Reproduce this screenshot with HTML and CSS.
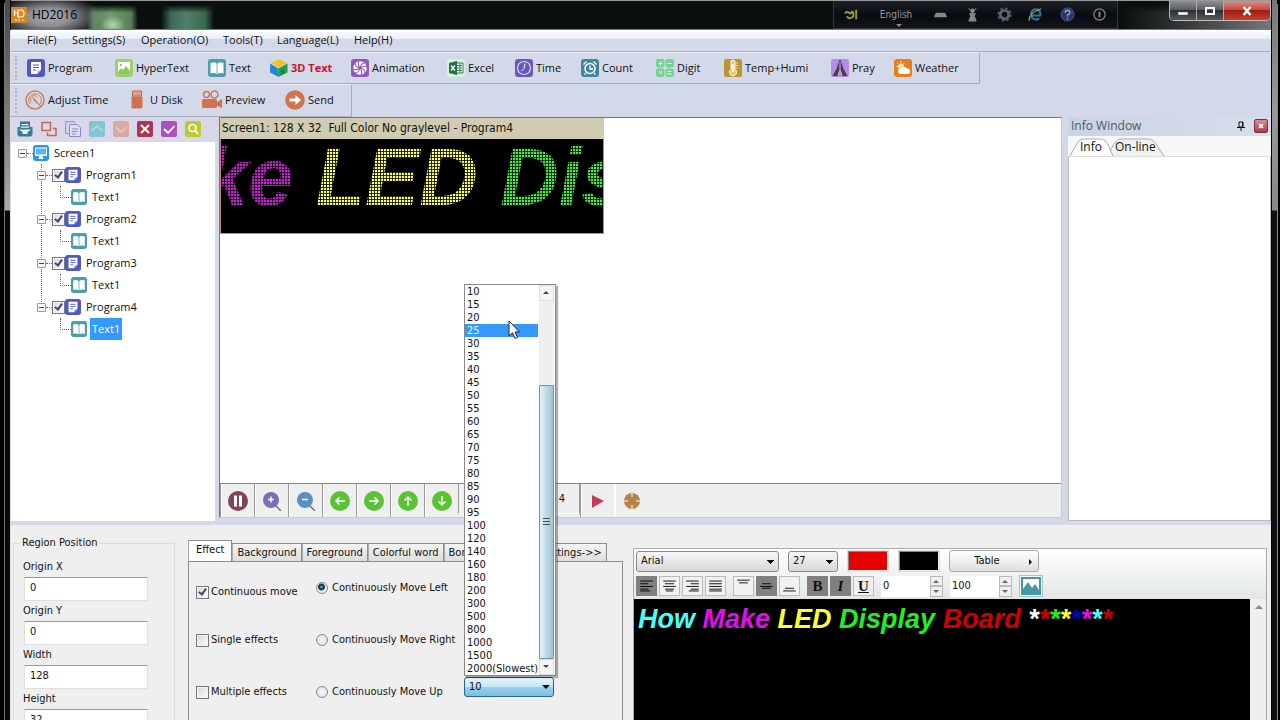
FILE: index.html
```html
<!DOCTYPE html>
<html lang="en">
<head>
<meta charset="utf-8">
<title>HD2016</title>
<link rel="stylesheet" href="styles.css">
</head>
<body>
<svg class="sprite" aria-hidden="true">
  <symbol id="program" viewBox="0 0 18 18"><rect width="18" height="18" rx="3" fill="#5058c8"/><path d="M4 3h10v8l-4 4H4z" fill="#fff"/><path d="M6 6h6M6 8.500h6M6 11h3" stroke="#5058c8"/><path d="M10.500 15v-3.500H14z" fill="#a9aef0"/></symbol>
  <symbol id="hyper" viewBox="0 0 18 18"><rect width="18" height="18" rx="3" fill="#9bd06e"/><rect x="3" y="3" width="12" height="12" fill="#fff"/><path d="M3 13l3-4 2 2 3-4 4 5v3H3z" fill="#8cc860"/><circle cx="6" cy="6" r="1.200" fill="#8cc860"/></symbol>
  <symbol id="text" viewBox="0 0 18 18"><rect width="18" height="18" rx="3" fill="#4aa0a8"/><path d="M2.500 4C5 3 7 3 8.600 4.500V15C7 13.800 5 13.800 2.500 14.500zM15.500 4C13 3 11 3 9.400 4.500V15c1.600-1.200 3.600-1.200 6.100-.5z" fill="#fff"/></symbol>
  <symbol id="cube" viewBox="0 0 18 18"><path d="M9 0l8 4-8 4.500L1 4z" fill="#f6c31c"/><path d="M0 4.500l8.500 5V18L0 13.500z" fill="#2388d8"/><path d="M17.500 4.500l-9 5V18l9-4.500z" fill="#1d9d50"/><path d="M11 12.500l2-1v3" stroke="#116b35" fill="none"/></symbol>
  <symbol id="anim" viewBox="0 0 18 18"><rect width="18" height="18" rx="3" fill="#9258bd"/><circle cx="9" cy="9" r="6.800" fill="#fff"/><path d="M9 9Q6 5 8 2M9 9Q10 4 14 4M9 9q4-3 7-1M9 9q5 1 5 5M9 9q3 4 1 7M9 9q-1 5-5 5M9 9q-4 3-7 1M9 9Q4 8 4 4" stroke="#9258bd" stroke-width="1.100" fill="none"/></symbol>
  <symbol id="excel" viewBox="0 0 18 18"><rect width="18" height="18" rx="3" fill="#d3f3dc"/><path d="M9 4h7v10H9z" fill="#fff" stroke="#2c8150"/><path d="M10 6.500h5M10 9h5M10 11.500h5M13 4v10" stroke="#2c8150"/><path d="M2 4l8-2v14l-8-2z" fill="#1f7244"/><path d="M4 6.500l4 5M8 6.500l-4 5" stroke="#fff" stroke-width="1.300"/></symbol>
  <symbol id="time" viewBox="0 0 18 18"><rect width="18" height="18" rx="3" fill="#6659b8"/><circle cx="9" cy="9" r="6.500" fill="none" stroke="#d9d4ff" stroke-width="1.200"/><path d="M10 4.500L9 9.500 6.500 12" stroke="#fff" fill="none"/></symbol>
  <symbol id="count" viewBox="0 0 18 18"><rect width="18" height="18" rx="3" fill="#40859c"/><circle cx="9" cy="9.500" r="5" fill="none" stroke="#fff" stroke-width="1.500"/><path d="M9 6.500v3.500h3M2.500 5.500l3-3M15.500 5.500l-3-3M5 14l-1.500 1.500M13 14l1.500 1.500" stroke="#fff" stroke-width="1.300" fill="none"/></symbol>
  <symbol id="digit" viewBox="0 0 18 18"><rect width="8.500" height="8.500" rx="2" fill="#77d394"/><rect x="9.500" width="8.500" height="8.500" rx="2" fill="#77d394"/><rect y="9.500" width="8.500" height="8.500" rx="2" fill="#77d394"/><rect x="9.500" y="9.500" width="8.500" height="8.500" rx="2" fill="#77d394"/><path d="M2.500 4.500h4M4.500 2.500v4M11.500 4.500h4M3 12l3 3M6 12l-3 3M11.500 12.500h4M11.500 15h4" stroke="#eafff0"/></symbol>
  <symbol id="temp" viewBox="0 0 18 18"><rect width="18" height="18" rx="2" fill="#bd9434"/><path d="M7 3a2 2 0 014 0v7.500a3.500 3.500 0 11-4 0z" fill="#e8c878" stroke="#fff"/><path d="M9 5v8" stroke="#fff" stroke-width="1.500"/><path d="M12 4h2M12 6.500h2M12 9h2" stroke="#e8d4a0"/></symbol>
  <symbol id="pray" viewBox="0 0 18 18"><rect width="18" height="18" rx="2" fill="#b98aee"/><path d="M8.500 1h1l3 9 4 7h-5L9 12l-2.500 5H1.500l4-7z" fill="#4c3d49"/><path d="M9 3v8L7 16M9 11l2 5" stroke="#e8dcf0" stroke-width=".8" fill="none"/></symbol>
  <symbol id="weather" viewBox="0 0 18 18"><rect width="18" height="18" rx="3" fill="#e87e18"/><circle cx="7" cy="7.500" r="3" fill="#ffe9c0"/><path d="M7 2v2M2 7.500h1.500M3.500 4l1 1M10.500 4l-1 1M3.500 11l1-1" stroke="#ffe9c0"/><path d="M6.500 15a2.500 2.500 0 01.3-5A3.400 3.400 0 0113 9.500a2.700 2.700 0 01.6 5.500z" fill="#fff"/></symbol>
  <symbol id="adjust" viewBox="0 0 20 20"><circle cx="10" cy="10" r="9" fill="none" stroke="#cf7f5f" stroke-width="1.500"/><path d="M5 14A6.300 6.300 0 1115 14M7 12.500A3.800 3.800 0 1112.500 7.500" fill="none" stroke="#cf7f5f"/><path d="M8 7.500l7.500 8.500L9 10.500z" fill="#cf7f5f" stroke="#cf7f5f"/></symbol>
  <symbol id="udisk" viewBox="0 0 20 20"><path d="M5.500 1h9v5h-9z" fill="#dfa38c" stroke="#c9694a"/><path d="M4.500 6.500h11V17a1.500 1.500 0 01-1.500 1.500H6A1.500 1.500 0 014.500 17z" fill="#d0714e"/></symbol>
  <symbol id="camera" viewBox="0 0 20 20"><circle cx="4.500" cy="4.500" r="3" fill="none" stroke="#cf7350" stroke-width="1.500"/><circle cx="12.500" cy="4.500" r="3.500" fill="none" stroke="#cf7350" stroke-width="1.500"/><rect y="9" width="15" height="9" rx="1.500" fill="#cf7350"/><path d="M14 13l6-4v9l-6-3z" fill="#cf7350"/></symbol>
  <symbol id="send" viewBox="0 0 20 20"><circle cx="10" cy="10" r="9.800" fill="#cf7350"/><path d="M4.500 8.500h6V5l5.500 5-5.500 5v-3.500h-6z" fill="#fff"/></symbol>
  <symbol id="archive" viewBox="0 0 16 16"><path d="M3 .5h10V6h2.500v7.500l-1.500 2H2l-1.500-2V6H3z" fill="#347c94"/><path d="M4.500 3h7v1.200h-7zM4 5.500h8v1.200H4zM2 8.500h12l-2.500 2h-1V13h-5v-2.500h-1z" fill="#e8f4f8"/></symbol>
  <symbol id="windows" viewBox="0 0 16 16"><path d="M1 1.500h8.500v8H1zM6.500 11.500v3H15v-7h-3" fill="none" stroke="#c56a45" stroke-width="1.500"/></symbol>
  <symbol id="copy" viewBox="0 0 16 16"><path d="M3.500 12.500H.7V.7H9l1.500 1.500" fill="none" stroke="#8c88cc"/><path d="M4.500 3.500h8l3 3v9h-11z" fill="#dcdcf4" stroke="#8c88cc"/><path d="M7 8h6M7 10.500h6M7 13h4" stroke="#8c88cc"/></symbol>
  <symbol id="up" viewBox="0 0 16 16"><rect width="16" height="16" rx="2" fill="#85c5d2"/><path d="M2.500 10L8 5l5.500 5" fill="none" stroke="#afdce6" stroke-width="1.500"/></symbol>
  <symbol id="down" viewBox="0 0 16 16"><rect width="16" height="16" rx="2" fill="#d9aaa1"/><path d="M2.500 6L8 11l5.500-5" fill="none" stroke="#e9c9c2" stroke-width="1.500"/></symbol>
  <symbol id="del" viewBox="0 0 16 16"><rect width="16" height="16" rx="2" fill="#ae364e"/><path d="M4 4l8 8M12 4l-8 8" stroke="#fff" stroke-width="2"/></symbol>
  <symbol id="ok" viewBox="0 0 16 16"><rect width="16" height="16" rx="2" fill="#ad50bf"/><path d="M3 8l4 4 6.500-7" fill="none" stroke="#fff" stroke-width="1.800"/></symbol>
  <symbol id="find" viewBox="0 0 16 16"><rect width="16" height="16" rx="2" fill="#bdc936"/><circle cx="7.500" cy="7" r="3.500" fill="none" stroke="#fff" stroke-width="1.600"/><path d="M10 9.500l3 3.500" stroke="#fff" stroke-width="1.800"/></symbol>
  <symbol id="monitor" viewBox="0 0 16 16"><rect width="16" height="16" rx="3" fill="#2d96dc"/><rect x="2" y="2.500" width="12" height="8.500" fill="#fff"/><rect x="3" y="3.500" width="10" height="6" fill="#59b4ee"/><path d="M6.500 11h3l1 3h-5z" fill="#fff"/></symbol>
</svg>

<div class="window">
  <header class="titlebar">
    <svg class="logo" viewBox="0 0 16 16" aria-hidden="true"><rect width="16" height="16" fill="#d98726"/><path d="M3.500 3v6M3.500 6h3.500M7 2.500V10h3q3 0 3-3.500T10 3H8.500" stroke="#fff" fill="none" stroke-width="1.200"/><path d="M4 13h2M7 13h2M11 13h1.500" stroke="#fff"/></svg>
    <h1 class="title">HD2016</h1>
    <div class="langbar">
      <svg viewBox="0 0 16 16"><path d="M1 7q2-3 4-1 3 2 4-2M3 10q3 4 7 0V5M13 3v10" stroke="#9aa02a" stroke-width="2" fill="none"/></svg>
      <button class="lang">English</button>
      <svg viewBox="0 0 16 16"><path d="M3 6h10l2 5H1z" fill="#85878b"/></svg>
      <svg viewBox="0 0 16 16"><circle cx="8" cy="4" r="2.500" fill="#85878b"/><path d="M5 7h6l-1 3 2 5H4l2-5zM4 1l2 3M12 1l-2 3" fill="#85878b" stroke="#85878b"/></svg>
      <svg viewBox="0 0 16 16"><circle cx="8" cy="8" r="4.500" fill="none" stroke="#58646f" stroke-width="3"/><circle cx="8" cy="8" r="6.800" fill="none" stroke="#58646f" stroke-width="1.500" stroke-dasharray="2.700 2.600"/></svg>
      <svg viewBox="0 0 16 16"><path d="M4 9h9A5 5 0 103.500 9 5 5 0 0012 12" fill="none" stroke="#2b76a8" stroke-width="2.200"/><path d="M1 15Q1 6 14 2" stroke="#a39a34" fill="none" stroke-width="1.200"/></svg>
      <svg viewBox="0 0 16 16"><circle cx="8" cy="8" r="7" fill="#29356b" stroke="#4b5785"/><path d="M5.500 6q0-2.500 2.500-2.500T10.500 6Q10.500 7.500 8 8.500V10M8 11.500v1.500" stroke="#9aa3c0" fill="none" stroke-width="1.500"/></svg>
      <svg viewBox="0 0 16 16"><circle cx="8" cy="8" r="6" fill="none" stroke="#85878b" stroke-width="1.300"/><path d="M8 5v6" stroke="#85878b" stroke-width="2"/></svg>
    </div>
    <div class="winbtns">
      <button aria-label="Minimize"><svg viewBox="0 0 16 12"><path d="M3 7h10v3H3z" fill="#fff" stroke="#444" stroke-width=".5"/></svg></button>
      <button aria-label="Maximize"><svg viewBox="0 0 16 12"><path d="M4 3h8v6H4z" fill="none" stroke="#fff" stroke-width="2"/></svg></button>
      <button class="close" aria-label="Close"><svg viewBox="0 0 16 12"><path d="M4.500 2l7 8M11.500 2l-7 8" stroke="#fff" stroke-width="2.500"/></svg></button>
    </div>
  </header>

  <div class="bars">
    <nav class="menubar">
      <button>File(F)</button><button>Settings(S)</button><button>Operation(O)</button><button>Tools(T)</button><button>Language(L)</button><button>Help(H)</button>
    </nav>
    <div class="toolbar tools-main">
      <button><svg><use href="#program"/></svg>Program</button>
      <button><svg><use href="#hyper"/></svg>HyperText</button>
      <button><svg><use href="#text"/></svg>Text</button>
      <button class="hot"><svg><use href="#cube"/></svg>3D Text</button>
      <button><svg><use href="#anim"/></svg>Animation</button>
      <button><svg><use href="#excel"/></svg>Excel</button>
      <button><svg><use href="#time"/></svg>Time</button>
      <button><svg><use href="#count"/></svg>Count</button>
      <button><svg><use href="#digit"/></svg>Digit</button>
      <button><svg><use href="#temp"/></svg>Temp+Humi</button>
      <button><svg><use href="#pray"/></svg>Pray</button>
      <button><svg><use href="#weather"/></svg>Weather</button>
    </div>
    <div class="toolbar tools-run">
      <button><svg><use href="#adjust"/></svg>Adjust Time</button>
      <button><svg><use href="#udisk"/></svg>U Disk</button>
      <button><svg><use href="#camera"/></svg>Preview</button>
      <button><svg><use href="#send"/></svg>Send</button>
    </div>
  </div>

  <main class="workspace">
    <aside class="side">
      <div class="side-tools">
        <button aria-label="Archive"><svg><use href="#archive"/></svg></button>
        <button aria-label="Arrange"><svg><use href="#windows"/></svg></button>
        <button aria-label="Copy"><svg><use href="#copy"/></svg></button>
        <button aria-label="Move up"><svg><use href="#up"/></svg></button>
        <button aria-label="Move down"><svg><use href="#down"/></svg></button>
        <button aria-label="Delete"><svg><use href="#del"/></svg></button>
        <button aria-label="Apply"><svg><use href="#ok"/></svg></button>
        <button aria-label="Find"><svg><use href="#find"/></svg></button>
      </div>
      <div class="tree">
        <div class="node"><i class="fold"></i><i class="dots"></i><svg><use href="#monitor"/></svg><span>Screen1</span></div>
        <ul class="programs">
          <li><div class="node"><i class="fold"></i><i class="dots"></i><input type="checkbox" id="p1" checked><svg><use href="#program"/></svg><label for="p1">Program1</label></div><div class="node leaf"><svg><use href="#text"/></svg><span>Text1</span></div></li>
          <li><div class="node"><i class="fold"></i><i class="dots"></i><input type="checkbox" id="p2" checked><svg><use href="#program"/></svg><label for="p2">Program2</label></div><div class="node leaf"><svg><use href="#text"/></svg><span>Text1</span></div></li>
          <li><div class="node"><i class="fold"></i><i class="dots"></i><input type="checkbox" id="p3" checked><svg><use href="#program"/></svg><label for="p3">Program3</label></div><div class="node leaf"><svg><use href="#text"/></svg><span>Text1</span></div></li>
          <li><div class="node"><i class="fold"></i><i class="dots"></i><input type="checkbox" id="p4" checked><svg><use href="#program"/></svg><label for="p4">Program4</label></div><div class="node leaf"><svg><use href="#text"/></svg><span class="selected">Text1</span></div></li>
        </ul>
      </div>
    </aside>

    <section class="stage">
      <div class="led">
        <div class="led-head">Screen1: 128 X 32 &nbsp;Full Color No graylevel - Program4</div>
        <div class="led-screen"><span class="magenta">ke</span> <span class="yellow">LED</span> <span class="green">Dis</span></div>
      </div>
      <div class="controls">
        <button aria-label="Pause"><svg viewBox="0 0 20 20"><circle cx="10" cy="10" r="10" fill="#7f4456"/><path d="M6 4.500h3v11H6zM11 4.500h3v11h-3z" fill="#fff"/></svg></button>
        <button aria-label="Zoom in"><svg viewBox="0 0 20 20"><path d="M13 14l6 6" stroke="#777" stroke-width="1.500"/><circle cx="9" cy="9" r="8" fill="#7672b6"/><path d="M6 8.500h6M9 5.500v6" stroke="#fff" stroke-width="1.500"/></svg></button>
        <button aria-label="Zoom out"><svg viewBox="0 0 20 20"><path d="M13 14l6 6" stroke="#777" stroke-width="1.500"/><circle cx="9" cy="9" r="8" fill="#5d90c2"/><path d="M6 8.500h6" stroke="#fff" stroke-width="1.500"/></svg></button>
        <button aria-label="Left"><svg viewBox="0 0 20 20"><circle cx="10" cy="10" r="10" fill="#5bc236"/><path d="M15 10H6M9.500 6.500L6 10l3.500 3.500" fill="none" stroke="#fff" stroke-width="1.500"/></svg></button>
        <button aria-label="Right"><svg viewBox="0 0 20 20"><circle cx="10" cy="10" r="10" fill="#5bc236"/><path d="M5 10h9M10.500 6.500L14 10l-3.500 3.500" fill="none" stroke="#fff" stroke-width="1.500"/></svg></button>
        <button aria-label="Up"><svg viewBox="0 0 20 20"><circle cx="10" cy="10" r="10" fill="#5bc236"/><path d="M10 15V6M6.500 9.500L10 6l3.500 3.500" fill="none" stroke="#fff" stroke-width="1.500"/></svg></button>
        <button aria-label="Down"><svg viewBox="0 0 20 20"><circle cx="10" cy="10" r="10" fill="#5bc236"/><path d="M10 5v9M6.500 10.500L10 14l3.500-3.500" fill="none" stroke="#fff" stroke-width="1.500"/></svg></button>
        <input class="step" aria-label="Step" value="4">
        <button aria-label="Play"><svg viewBox="0 0 20 20"><path d="M4 4l12 6-12 7z" fill="#c43c55"/></svg></button>
        <button class="flat" aria-label="Target"><svg viewBox="0 0 20 20"><circle cx="10" cy="10" r="8" fill="#b5834a"/><path d="M10 1v5M10 14v5M1 10h5M14 10h5" stroke="#ead9c2" stroke-width="1.500"/></svg></button>
      </div>
    </section>

    <aside class="info">
      <div class="info-head"><h2>Info Window</h2>
        <button aria-label="Pin"><svg viewBox="0 0 10 10"><path d="M3 1h4v5H3zM6.500 1v5M1 6.500h8M5 7v3" stroke="#111" fill="none"/></svg></button>
        <button class="x" aria-label="Close panel"><svg viewBox="0 0 10 10"><path d="M3 3l4 4M7 3L3 7" stroke="#fff" stroke-width="1.700"/></svg></button>
      </div>
      <div class="info-tabs">
        <svg class="tabshape" viewBox="0 0 96 18" aria-hidden="true"><path d="M38 18Q44 3 49 1H79Q85 2 88 9L94 18" fill="#f1f1ef" stroke="#aaa"/><path d="M0 18L5 9Q9 1 13 1H31Q36 1 39 9L43 18" fill="#fff" stroke="#aaa"/></svg>
        <button>Info</button><button>On-line</button>
      </div>
      <div class="info-body"></div>
    </aside>
  </main>

  <section class="bottom">
    <fieldset class="region">
      <legend>Region Position</legend>
      <label for="ox">Origin X</label><input id="ox" value="0">
      <label for="oy">Origin Y</label><input id="oy" value="0">
      <label for="w">Width</label><input id="w" value="128">
      <label for="h">Height</label><input id="h" value="32">
    </fieldset>

    <div class="effects">
      <div class="tabs">
        <button class="active">Effect</button><button>Background</button><button>Foreground</button><button>Colorful word</button><button>Border</button><button class="last">Settings-&gt;&gt;</button>
      </div>
      <div class="panel">
        <label class="nudge"><input type="checkbox" checked>Continuous move</label>
        <label><input type="radio" name="dir" checked>Continuously Move Left</label>
        <span></span>
        <label><input type="checkbox">Single effects</label>
        <label><input type="radio" name="dir">Continuously Move Right</label>
        <span></span>
        <label><input type="checkbox">Multiple effects</label>
        <label><input type="radio" name="dir">Continuously Move Up</label>
        <div class="speed">
          <select aria-label="Speed"><option>10</option></select>
          <div class="popup">
            <ul role="listbox">
              <li>10</li><li>15</li><li>20</li><li class="on">25</li><li>30</li><li>35</li><li>40</li><li>45</li><li>50</li><li>55</li><li>60</li><li>65</li><li>70</li><li>75</li><li>80</li><li>85</li><li>90</li><li>95</li><li>100</li><li>120</li><li>140</li><li>160</li><li>180</li><li>200</li><li>300</li><li>500</li><li>800</li><li>1000</li><li>1500</li><li>2000(Slowest)</li>
            </ul>
            <div class="scroll"><button class="arrow" aria-label="Scroll up"></button><div class="thumb"></div><button class="arrow dn" aria-label="Scroll down"></button></div>
            <svg class="cursor" viewBox="0 0 12 20" aria-hidden="true"><path d="M1 1v15l3.500-3.300L7 18.500l2.500-1L7 12h4.500z" fill="#fff" stroke="#223"/></svg>
          </div>
        </div>
      </div>
    </div>

    <div class="editor">
      <div class="editor-tools">
        <div class="row">
          <select class="font" aria-label="Font"><option>Arial</option></select>
          <select class="size" aria-label="Size"><option>27</option></select>
          <button class="swatch red" aria-label="Text colour"></button>
          <button class="swatch black" aria-label="Back colour"></button>
          <button class="table">Table</button>
        </div>
        <div class="row two">
          <div class="group">
            <button class="on" aria-label="Align left"><svg viewBox="0 0 20 20"><path d="M3 4.500h14M3 7.500h9M3 10.500h14M3 13.500h9M3 15.500h11"/></svg></button>
            <button aria-label="Align centre"><svg viewBox="0 0 20 20"><path d="M3 4.500h14M5 7.500h10M3 10.500h14M5 13.500h10M6 15.500h8"/></svg></button>
            <button aria-label="Align right"><svg viewBox="0 0 20 20"><path d="M3 4.500h14M8 7.500h9M3 10.500h14M8 13.500h9M6 15.500h11"/></svg></button>
            <button aria-label="Justify"><svg viewBox="0 0 20 20"><path d="M3 4.500h14M3 7.500h14M3 10.500h14M3 13.500h14M3 15.500h14"/></svg></button>
          </div>
          <div class="group">
            <button aria-label="Top"><svg viewBox="0 0 20 20"><path d="M3 3.500h14M5 6.500h10"/></svg></button>
            <button class="on" aria-label="Middle"><svg viewBox="0 0 20 20"><path d="M5 7.500h10M3 10.500h14M5 12.500h10"/></svg></button>
            <button aria-label="Bottom"><svg viewBox="0 0 20 20"><path d="M5 12.500h10M3 15.500h14"/></svg></button>
          </div>
          <div class="group wide">
            <button class="on glyph">B</button><button class="on glyph it">I</button><button class="glyph un">U</button>
          </div>
          <div class="spin"><input aria-label="Spacing" value="0"><span class="ud"><button aria-label="More"></button><button class="dn" aria-label="Less"></button></span></div>
          <div class="spin"><input aria-label="Scale" value="100"><span class="ud"><button aria-label="More"></button><button class="dn" aria-label="Less"></button></span></div>
          <button class="image" aria-label="Insert image"><svg viewBox="0 0 20 18"><rect width="20" height="18" fill="#4596a8"/><rect x="2" y="2" width="16" height="13" fill="#fff"/><path d="M2 12l5-7 4 6 3-4 4 6v3H2z" fill="#4596a8"/></svg></button>
        </div>
      </div>
      <div class="editor-body">
        <div class="message" contenteditable="true"><span class="cyan">How</span> <span class="magenta">Make</span> <span class="yellow">LED</span> <span class="green">Display</span> <span class="red-t">Board</span> <span class="white">*</span><span class="red-t">*</span><span class="green">*</span><span class="yellow">*</span><span class="blue">*</span><span class="magenta">*</span><span class="cyan">*</span><span class="red-t">*</span></div>
        <div class="editor-scroll"><button class="arrow" aria-label="Scroll up"></button></div>
      </div>
    </div>
  </section>
</div>
</body>
</html>
```
FILE: styles.css
```css
* { box-sizing: border-box; }
body {
  margin: 0;
  height: 100vh;
  overflow: hidden;
  background: #000;
  color: #111;
  font-family: "DejaVu Sans Condensed", "DejaVu Sans", sans-serif;
  font-size: 11px;
  line-height: 14px;
}
button, input, select { font: inherit; color: inherit; margin: 0; }
button { background: none; border: 0; padding: 0; }
svg { display: block; flex: none; }
ul { list-style: none; margin: 0; padding: 0; }
.sprite { position: absolute; width: 0; height: 0; }

.window {
  display: flex;
  flex-direction: column;
  height: 100vh;
  padding: 0 9px 0 11px;
  background:
    linear-gradient(#ddd, #ddd) 10px 30px / 1px 100% no-repeat,
    linear-gradient(#777, #777) 4px 3px / 1px 100% no-repeat,
    linear-gradient(#48494c 0, #8a8a8a 150px, #aaa 210px, #0a0a0a 211px) 5px 0 / 5px 100% no-repeat,
    linear-gradient(#888, #888) right 2px top 4px / 1px 100% no-repeat,
    linear-gradient(#777 0, #999 110px, #888 210px, #111 211px) right 3px top 0 / 5px 100% no-repeat,
    #000;
}

/* Title bar */
.titlebar {
  display: flex;
  align-items: center;
  height: 30px;
  flex: none;
  border-top: 1px solid #999;
  border-bottom: 1px solid #777;
  background:
    radial-gradient(ellipse 54px 22px at 38px 16px, #a8a8b0 0, #8e8e94 40%, transparent 100%),
    radial-gradient(ellipse 12px 9px at 102px 24px, #b4d4b4, transparent),
    linear-gradient(#0a0f0f 4px, transparent 12px),
    linear-gradient(90deg, transparent 76px, #58805a 82px, #6f9f68 100px, #58805a 120px, transparent 127px),
    linear-gradient(90deg, transparent 150px, #3b6a56 160px, #4f8066 175px, #3b6950 194px, transparent 203px),
    linear-gradient(90deg, #0a0f0f 0 1110px, #3a3c3e 1180px, #777 100%);
}
.logo { width: 16px; height: 16px; }
.title {
  margin: 0 0 0 5px;
  flex: 1;
  font: 400 12px/16px "Open Sans", sans-serif;
  color: #000;
}
.langbar {
  display: flex;
  align-items: center;
  justify-content: space-between;
  width: 285px;
  height: 28px;
  margin-right: 51px;
  padding: 0 10px;
  background: linear-gradient(#20222b, #090b10 50%, #12141b);
  border: 1px solid #33353c;
  border-top: 0;
}
.langbar svg { width: 15px; height: 15px; }
.lang { color: #999; font-size: 10px; position: relative; padding: 0 4px; }
.lang::after {
  content: "";
  position: absolute;
  top: 16px;
  left: 50%;
  border: 3px solid transparent;
  border-top-color: #888;
}
.winbtns {
  display: flex;
  align-self: flex-start;
  height: 20px;
  border: 1px solid #bbb;
  border-top: 0;
  border-radius: 0 0 5px 5px;
  overflow: hidden;
}
.winbtns button {
  display: flex;
  align-items: center;
  justify-content: center;
  width: 27px;
  background: linear-gradient(#8c8f93, #5a5d61 45%, #2e3033 50%, #55585b);
  border-right: 1px solid #aaa;
}
.winbtns svg { width: 16px; height: 12px; }
.winbtns .close {
  width: 46px;
  border-right: 0;
  background: linear-gradient(#d99088, #c34b40 45%, #9f1c12 50%, #c8402c);
}

/* Menus and toolbars */
.bars { flex: none; background: #d4d9ea; font-family: "Open Sans", sans-serif; }
.menubar {
  display: grid;
  grid-template-columns: 45px 69px 82px 54px 77px 45px;
  height: 22px;
  padding: 0 0 2px 16px;
  background: linear-gradient(#fff, #e8ecf5 9px, #d4d9ea 9px);
  border-bottom: 1px solid #a9adc0;
}
.menubar button, .toolbar button { text-align: left; white-space: nowrap; }
.toolbar {
  display: grid;
  align-items: center;
  width: max-content;
  height: 32px;
  position: relative;
  padding-left: 16px;
  border-top: 1px solid #eef0f8;
  border-right: 1px solid #a9adc0;
  border-bottom: 1px solid #a9adc0;
}
.toolbar::before {
  content: "";
  position: absolute;
  left: 4px;
  top: 3px;
  bottom: 3px;
  border-left: 2px dotted #b2b5c8;
}
.toolbar button { display: flex; align-items: center; gap: 3px; }
.toolbar svg { width: 18px; height: 18px; }
.tools-main { grid-template-columns: 88px 93px 62px 81px 96px 68px 66px 75px 68px 107px 63px 85px; }
.tools-run { grid-template-columns: 102px 75px 83px 66px; height: 33px; padding: 0 0 2px 14px; }
.tools-run svg { width: 20px; height: 20px; }
.hot { color: #cc1030; font-weight: 700; }

/* Workspace */
.workspace { display: flex; flex: 1; min-height: 0; background: #d4d9ea; }
.side { display: flex; flex-direction: column; width: 204px; margin-bottom: 2px; font-family: "Open Sans", sans-serif; }
.side-tools { display: flex; align-items: center; gap: 8px; height: 25px; padding: 0 0 2px 6px; background: #d9d7ea; }
.side-tools svg { width: 16px; height: 16px; }
.tree { flex: 1; background: #fff; }
.node { display: flex; align-items: center; height: 22px; padding-left: 7px; }
.node svg { width: 16px; height: 16px; }
.node > span, .node > label { margin-left: 3px; padding: 4px 2px; }
.fold {
  width: 9px;
  height: 9px;
  border: 1px solid #999;
  border-radius: 1px;
  background: linear-gradient(#345, #345) 1px 3px / 5px 1px no-repeat, #f8f8f8;
}
.dots { width: 6px; border-top: 1px dotted #666; }
.programs { position: relative; }
.programs .node { padding-left: 26px; }
.programs::before {
  content: "";
  position: absolute;
  left: 30px;
  top: 0;
  height: 138px;
  border-left: 1px dotted #666;
}
.programs .fold { position: relative; }
.programs .leaf { padding-left: 60px; position: relative; }
.leaf::before {
  content: "";
  position: absolute;
  left: 49px;
  top: 0;
  width: 10px;
  height: 11px;
  border-left: 1px dotted #666;
  border-bottom: 1px dotted #666;
}
.selected { background: #3399ff; color: #fff; }
input[type="checkbox"] {
  appearance: none;
  width: 13px;
  height: 13px;
  border: 1px solid #777;
  background: linear-gradient(135deg, #d2d5da, #fff);
  box-shadow: inset 0 0 0 1px #f4f4f4;
  position: relative;
  flex: none;
}
input[type="checkbox"]:checked::after {
  content: "";
  position: absolute;
  left: 3px;
  top: 0;
  width: 3px;
  height: 6px;
  border: solid #45456f;
  border-width: 0 2px 2px 0;
  transform: rotate(35deg);
}
.stage {
  display: flex;
  flex-direction: column;
  justify-content: space-between;
  flex: 1;
  margin: 0 0 5px 4px;
  border: 1px solid #777;
  border-right-color: #ccc;
  border-bottom-color: #ccc;
  background: #fff;
}
.led { width: 384px; }
.led-head { height: 21px; padding-left: 2px; background: #d0cbb1; font-size: 12px; line-height: 20px; white-space: nowrap; }
.led-screen {
  position: relative;
  height: 95px;
  overflow: hidden;
  border: 1px solid #c08878;
  border-top: 0;
  background: #000;
  font: italic 700 81px/76px "Liberation Sans", Arial, sans-serif;
  text-indent: -18px;
  white-space: nowrap;
}
.led-screen::after {
  content: "";
  position: absolute;
  inset: 0;
  background:
    repeating-linear-gradient(90deg, rgba(0,0,0,.8) 0 1px, transparent 1px 3px),
    repeating-linear-gradient(rgba(0,0,0,.8) 0 1px, transparent 1px 3px);
}
.cyan { color: #4ff; }
.magenta { color: #e010e8; }
.yellow { color: #ffff30; }
.green { color: #20f020; }
.red-t { color: #d00000; }
.white { color: #fff; }
.blue { color: #0000d0; }
.led .yellow { color: #fcff60; }
.led .magenta { color: #d21ee0; }
.led .green { color: #38f838; }
.controls { display: flex; height: 34px; background: #efefef; border-top: 1px solid #888; }
.controls button {
  display: flex;
  align-items: center;
  justify-content: center;
  width: 34px;
  border-left: 1px solid #999;
  box-shadow: inset 1px 0 #fff;
}
.controls button.flat { border-left-color: #fff; }
.controls svg { width: 20px; height: 20px; }
.step {
  width: 122px;
  padding: 0 14px 0 0;
  border: 1px solid #999;
  border-bottom-color: #fff;
  border-top: 0;
  background: #efefef;
  text-align: right;
  margin-bottom: 3px;
}
.info { display: flex; flex-direction: column; width: 203px; margin: 0 0 2px 6px; font-family: "Open Sans", sans-serif; }
.info-head { display: flex; align-items: center; gap: 8px; height: 19px; padding: 0 3px 2px; background: linear-gradient(90deg, #c9d4e2, #d8deec); }
.info-head h2 { flex: 1; margin: 0; font-size: 12px; font-weight: 400; color: #4e5666; }
.info-head svg { width: 10px; height: 10px; }
.info-head .x { padding: 1px; border: 1px solid #7b3040; border-radius: 2px; background: linear-gradient(#d78d90, #a93e48); }
.info-tabs { display: flex; gap: 13px; position: relative; height: 20px; padding: 2px 0 0 12px; background: #f6f7f8; z-index: 0; }
.info-tabs button { font-size: 12px; }
.tabshape { position: absolute; left: 2px; top: 2px; width: 96px; height: 18px; z-index: -1; }
.info-body { flex: 1; background: #fff; border: 1px solid #bbb; border-top-color: #ddd; }

/* Property area */
.bottom { display: flex; flex: none; height: 197px; border-top: 2px solid #d4d9ee; background: #efefef; }
.region {
  display: flex;
  flex-direction: column;
  width: 162px;
  margin: 11px 0 0 2px;
  padding: 9px 10px 0;
  border: 1px solid #dcdcdc;
  border-bottom: 0;
  min-width: 0;
}
.region legend { margin-left: -4px; padding: 0 2px; }
.region label { flex: none; margin-left: -1px; height: 18px; line-height: 16px; }
.region input { flex: none; width: 124px; height: 24px; margin-bottom: 2px; padding: 0 5px 3px; border: 1px solid #dfdfdf; border-top-color: #999; background: #fff; }
.effects { display: flex; flex-direction: column; width: 435px; margin: 15px 0 0 13px; }
.tabs { display: flex; align-items: flex-end; height: 22px; }
.tabs button {
  height: 19px;
  padding: 0 4px;
  border: 1px solid #8c8c8c;
  border-left-color: #aaa;
  background: linear-gradient(#f4f4f4, #ddd);
  white-space: nowrap;
}
.tabs .active { align-self: stretch; height: 22px; padding: 0 7px 3px; background: #fff; border-bottom: 0; }
.tabs .last { flex: 0 0 120px; text-align: right; }
.panel {
  display: grid;
  grid-template-columns: 120px 148px auto;
  grid-template-rows: 52px 52px 52px;
  align-items: center;
  flex: 1;
  align-content: start;
  margin-top: -1px;
  padding-left: 7px;
  border: 1px solid #8c8c8c;
  border-bottom: 0;
}
.panel label { display: flex; align-items: center; gap: 2px; white-space: nowrap; }
.panel .nudge { padding-top: 8px; }
.panel input[type="radio"] {
  appearance: none;
  width: 12px;
  height: 12px;
  margin-right: 2px;
  border: 1px solid #8a8a8a;
  border-radius: 50%;
  background: radial-gradient(#f8f8f8, #d8dbde);
}
.panel input[type="radio"]:checked { background: radial-gradient(circle at 45% 40%, #7ad0e0 0, #123c58 2px, #123c58 3px, #e8edf0 4px); }
select {
  appearance: none;
  height: 21px;
  padding: 0 4px;
  border: 1px solid #888;
  border-radius: 3px;
}
.speed { position: relative; width: 90px; margin-bottom: 10px; }
.speed select { display: block; width: 90px; height: 20px; border: 1px solid #2c628b; background: linear-gradient(#e4f4fc, #c4e5f6 50%, #98d1ef 50%, #7cbfe2); }
.speed::after {
  content: "";
  position: absolute;
  right: 4px;
  top: 8px;
  border: 4px solid transparent;
  border-top-color: #111;
}
.popup {
  position: absolute;
  left: 0;
  bottom: 21px;
  z-index: 5;
  display: flex;
  width: 92px;
  border: 1px solid #888;
  background: #fff;
  box-shadow: 2px 2px 1px rgba(0,0,0,.3);
}
.popup ul { flex: 1; }
.popup li { width: 73px; height: 13px; padding-left: 2px; line-height: 14px; white-space: nowrap; }
.popup .on { background: #3399ff; color: #dff; }
.scroll { display: flex; flex-direction: column; width: 15px; margin-right: 1px; background: #efefef; }
.arrow { position: relative; height: 16px; width: 15px; border: 1px solid #ddd; background: #f4f4f4; }
.arrow::after { content: ""; position: absolute; left: 3px; top: 2px; border: 3px solid transparent; border-bottom-color: #444; }
.arrow.dn::after { top: 5px; border-bottom-color: transparent; border-top-color: #444; }
.thumb {
  flex: 1;
  margin-top: 84px;
  border: 1px solid #6f93a6;
  border-radius: 1px;
  background:
    repeating-linear-gradient(#356 0 1px, transparent 1px 3px) center / 7px 8px no-repeat,
    linear-gradient(90deg, #e4f2f8, #b9d5e1 60%, #9fc3d2);
}
.cursor { position: absolute; left: 43px; top: 35px; width: 12px; height: 20px; }

/* Text editor */
.editor { display: flex; flex-direction: column; flex: 1; margin: 23px 4px 0 10px; border: 1px solid #aaa; border-bottom: 0; }
.editor-tools { display: flex; flex-direction: column; gap: 3px; padding: 1px 1px 2px 2px; background: linear-gradient(#fff, #e1e6e4); }
.row { display: flex; height: 22px; align-items: center; gap: 9px; }
.row.two { gap: 7px; }
.font, .size {
  background:
    linear-gradient(#111, #111) right 4px top 8px / 7px 1px no-repeat,
    linear-gradient(#111, #111) right 5px top 9px / 5px 1px no-repeat,
    linear-gradient(#111, #111) right 6px top 10px / 3px 1px no-repeat,
    linear-gradient(#111, #111) right 7px top 11px / 1px 1px no-repeat,
    linear-gradient(#f6f6f6, #e8e8e8 50%, #d8d8d8);
}
.font { width: 143px; }
.size { width: 50px; }
.swatch { width: 42px; height: 22px; border: 2px solid #eee; border-top-color: #888; border-left-color: #888; outline: 1px solid #ddd; outline-offset: -1px; }
.red { background: #e60000; }
.black { background: #000; }
.table { position: relative; width: 90px; height: 22px; padding-right: 14px; border: 1px solid #aaa; border-radius: 3px; background: linear-gradient(#fff, #f0f0f0 50%, #ddd); }
.table::after { content: ""; position: absolute; right: 3px; top: 8px; border: 3px solid transparent; border-left-color: #111; }
.group { display: flex; gap: 2px; }
.group button { width: 21px; height: 20px; border: 1px solid #bbb; background: #f1f1f1; }
.group .on { background: #808080; border-color: #808080; }
.group svg { width: 19px; height: 18px; stroke: #000; }
.group .glyph { font: 700 15px/16px "Liberation Serif", serif; }
.group .it { font-style: italic; }
.un { text-decoration: underline; }
.spin { display: flex; width: 62px; height: 21px; background: #fff; }
.spin input { width: 49px; min-width: 0; padding: 0 2px; border: 0; background: #fff; }
.ud { display: flex; flex-direction: column; width: 13px; }
.ud button { flex: 1; position: relative; border: 1px solid #bbb; background: #f0f0f0; }
.ud button::after { content: ""; position: absolute; left: 2px; top: 0; border: 3px solid transparent; border-bottom-color: #667; }
.ud .dn::after { top: 3px; border-bottom-color: transparent; border-top-color: #667; }
.image { padding: 1px; border: 1px solid #9cc; background: #fff; }
.image svg { width: 20px; height: 18px; }
.editor-body { display: flex; flex: 1; }
.message {
  flex: 1;
  padding: 5px 4px;
  background: #000;
  font: italic 700 27px/31px "Liberation Sans", Arial, sans-serif;
  white-space: nowrap;
}
.editor-scroll { width: 16px; background: #efefef; }
.editor-scroll .arrow { border: 0; background: none; }
.editor-scroll .arrow::after { left: 5px; border-width: 4px; border-bottom-color: #888; }
```
